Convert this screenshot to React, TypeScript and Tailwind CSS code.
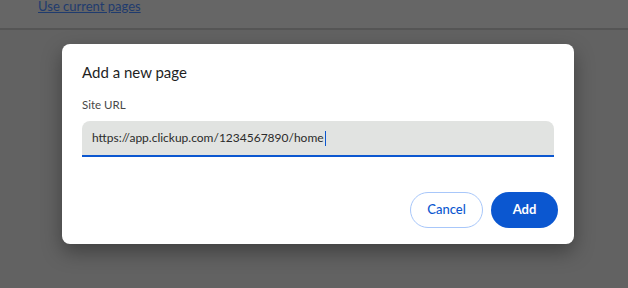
export default function App() {
  return (
    <div
      className="relative h-[288px] w-full overflow-hidden bg-[#626262]"
      style={{ fontFamily: 'Lato, "Noto Sans", sans-serif' }}
    >
      <div className="flex h-[28px] items-start bg-[#666666] pl-[38px]">
        <a className="-mt-[4px] text-[13px] leading-[20px] text-[#1f3b6e] underline">
          Use current pages
        </a>
      </div>
      <div className="h-[2px] bg-[#555555]" />

      <div className="absolute left-[62px] top-[44px] flex h-[200px] w-[512px] flex-col rounded-[8px] bg-white shadow-[0_8px_20px_rgba(0,0,0,0.35)]">
        <div className="px-[20px] pt-[18px]">
          <h2 className="text-[15px] leading-[20px] text-[#1f1f1f]">Add a new page</h2>
          <label className="mt-[15px] block text-[11.5px] leading-[16px] text-[#474747]">
            Site URL
          </label>
          <div className="mt-[8px] flex h-[36px] items-center rounded-t-[8px] border-b-2 border-[#0b57d0] bg-[#e1e3e1] pl-[10px]">
            <span className="text-[12px] text-[#2b2b2b]">https://app.clickup.com/1234567890/home</span>
            <span className="ml-px h-[15px] w-px bg-[#0b57d0]" />
          </div>
        </div>
        <div className="mt-auto flex justify-end gap-[8px] pb-[16px] pr-[16px]">
          <button className="h-[36px] w-[73px] rounded-full border border-[#a8c7fa] text-[13px] font-medium text-[#0b57d0]">
            Cancel
          </button>
          <button className="h-[36px] w-[67px] rounded-full bg-[#0b57d0] text-[13px] font-bold text-white">
            Add
          </button>
        </div>
      </div>
    </div>
  );
}
